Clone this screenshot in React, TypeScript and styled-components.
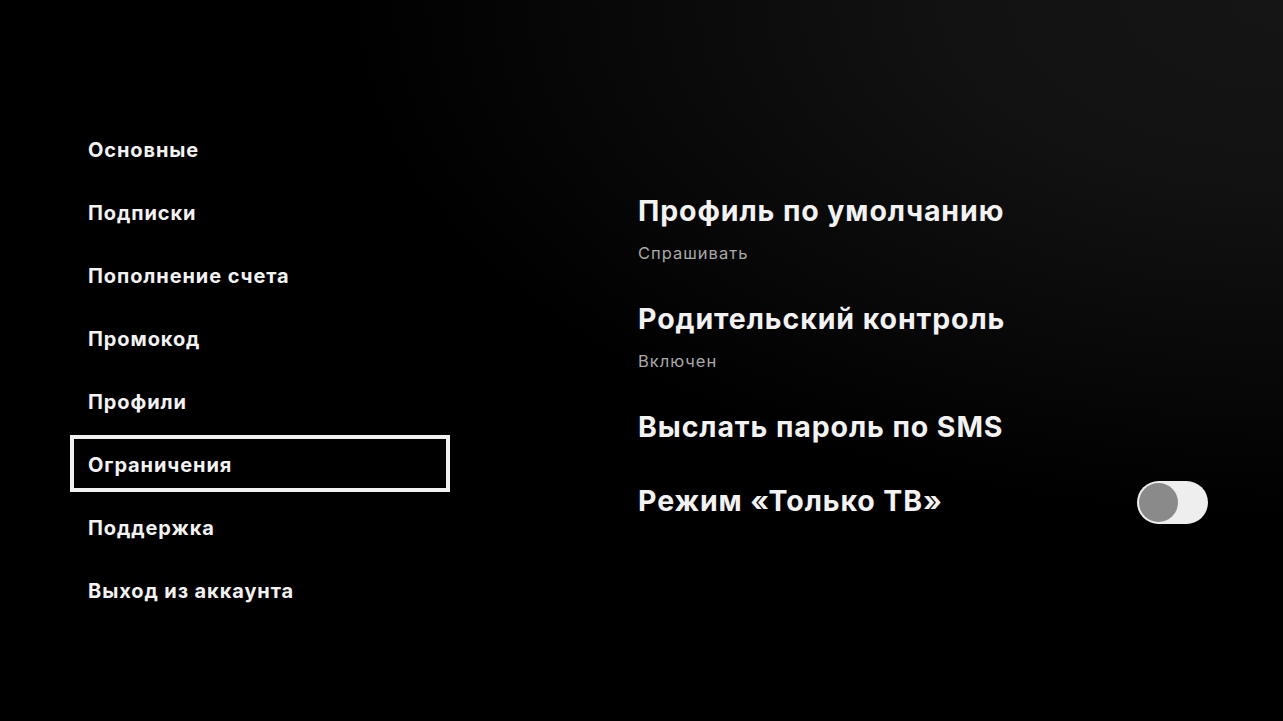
import React, { useState } from "react";
import styled, { createGlobalStyle } from "styled-components";

const Global = createGlobalStyle`
  html, body { margin: 0; padding: 0; background: #000; }
  body { font-family: "Inter", "Noto Sans", sans-serif; }
  * { box-sizing: border-box; }
`;

const Screen = styled.div`
  width: 1283px;
  height: 721px;
  overflow: hidden;
  display: flex;
  flex-direction: row;
  padding-left: 70px;
  background:
    radial-gradient(ellipse 940px 520px at 100% 0%, #151515 0%, #121212 35%, #070707 75%, #000 100%),
    #000;
`;

const Nav = styled.nav`
  width: 380px;
  padding-top: 120px;
  display: flex;
  flex-direction: column;
  gap: 6px;
`;

const NavItem = styled.div<{ $active?: boolean }>`
  height: 57px;
  display: flex;
  align-items: center;
  padding: 3px 0 0 14px;
  border: 4px solid ${(p) => (p.$active ? "#f2f2f2" : "transparent")};
  color: #f2f2f2;
  font-size: 20px;
  font-weight: 700;
  letter-spacing: 0.9px;
  white-space: nowrap;
`;

const Content = styled.section`
  width: 570px;
  margin-left: 188px;
  padding-top: 193px;
  display: flex;
  flex-direction: column;
  gap: 38px;
`;

const Setting = styled.div`
  display: flex;
  flex-direction: column;
  gap: 14px;
`;

const SettingRow = styled.div`
  display: flex;
  align-items: center;
  justify-content: space-between;
  height: 36px;
`;

const Title = styled.div`
  color: #f2f2f2;
  font-size: 28.5px;
  line-height: 36px;
  font-weight: 700;
  letter-spacing: 0.9px;
  white-space: nowrap;
`;

const Sub = styled.div`
  color: #a9a9a9;
  font-size: 16.5px;
  line-height: 20px;
  font-weight: 400;
  letter-spacing: 1px;
`;

const Track = styled.div<{ $on: boolean }>`
  width: 71px;
  height: 43px;
  margin-top: 2px;
  border-radius: 22px;
  background: #eeeeee;
  padding: 2px;
  display: flex;
  justify-content: ${(p) => (p.$on ? "flex-end" : "flex-start")};
  align-items: center;
  cursor: pointer;
  flex-shrink: 0;
`;

const Knob = styled.div`
  width: 39px;
  height: 39px;
  border-radius: 50%;
  background: #8a8a8a;
`;

const menu = [
  "Основные",
  "Подписки",
  "Пополнение счета",
  "Промокод",
  "Профили",
  "Ограничения",
  "Поддержка",
  "Выход из аккаунта",
];

export default function App() {
  const [tvOnly, setTvOnly] = useState(false);
  return (
    <>
      <Global />
      <Screen>
        <Nav>
          {menu.map((m) => (
            <NavItem key={m} $active={m === "Ограничения"}>
              {m}
            </NavItem>
          ))}
        </Nav>
        <Content>
          <Setting>
            <Title>Профиль по умолчанию</Title>
            <Sub>Спрашивать</Sub>
          </Setting>
          <Setting>
            <Title>Родительский контроль</Title>
            <Sub>Включен</Sub>
          </Setting>
          <Setting>
            <Title>Выслать пароль по SMS</Title>
          </Setting>
          <SettingRow>
            <Title>Режим «Только ТВ»</Title>
            <Track $on={tvOnly} onClick={() => setTvOnly(!tvOnly)}>
              <Knob />
            </Track>
          </SettingRow>
        </Content>
      </Screen>
    </>
  );
}
